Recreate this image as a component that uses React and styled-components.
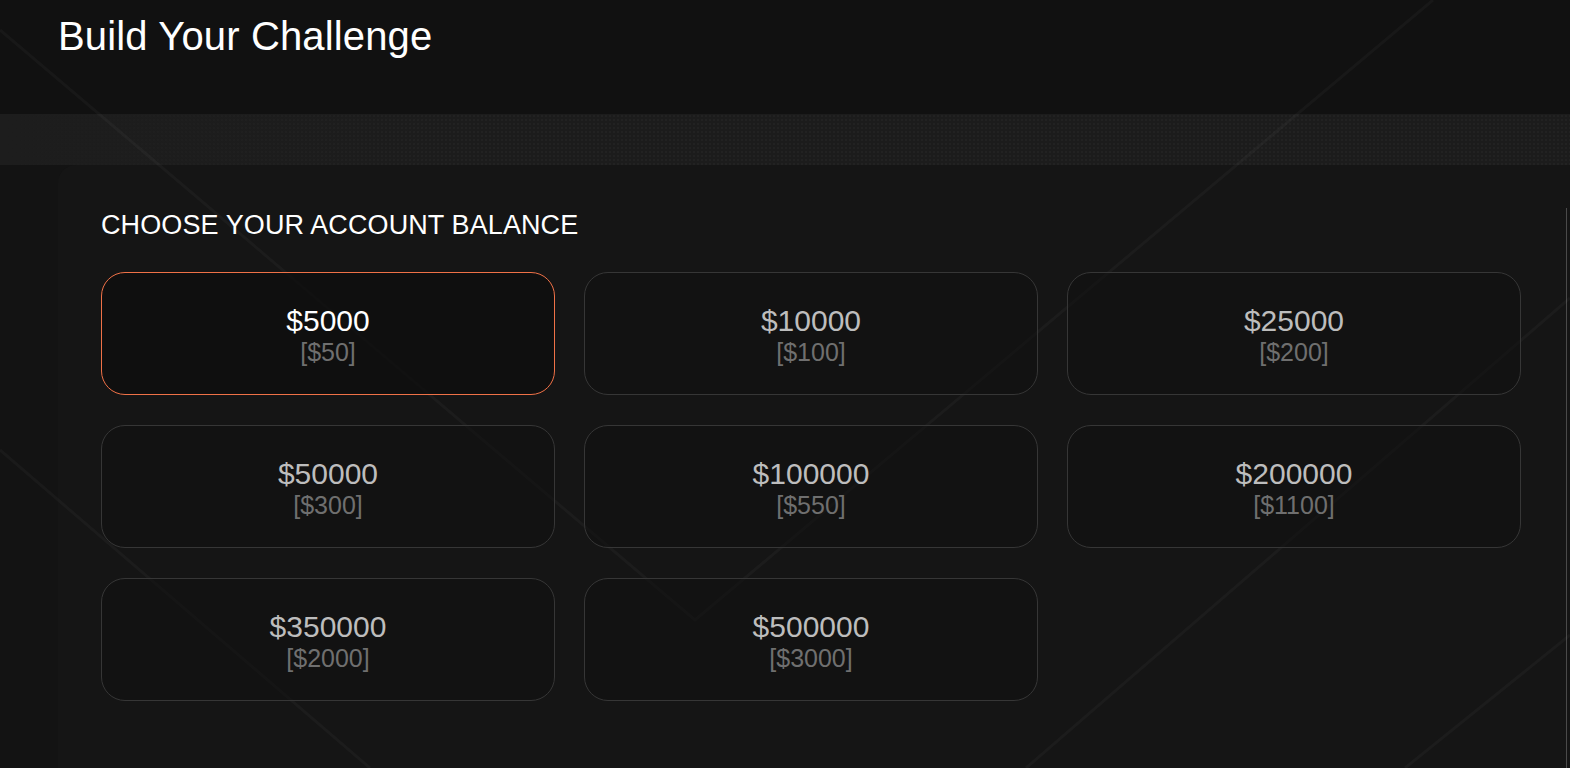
import React, { useState } from "react";
import styled, { createGlobalStyle } from "styled-components";

const GlobalStyle = createGlobalStyle`
  html, body {
    margin: 0;
    padding: 0;
    background: #121212;
    font-family: "Liberation Sans", Arial, sans-serif;
  }
  * { box-sizing: border-box; }
`;

const balances = [
  { amount: "$5000", fee: "[$50]" },
  { amount: "$10000", fee: "[$100]" },
  { amount: "$25000", fee: "[$200]" },
  { amount: "$50000", fee: "[$300]" },
  { amount: "$100000", fee: "[$550]" },
  { amount: "$200000", fee: "[$1100]" },
  { amount: "$350000", fee: "[$2000]" },
  { amount: "$500000", fee: "[$3000]" },
];

const Page = styled.div`
  position: relative;
  display: flex;
  flex-direction: column;
  height: 100vh;
  overflow: hidden;
  background: #121212;
`;

// faint diagonal strokes drawn over the backgrounds, under the text
const Decor = styled.svg`
  position: absolute;
  inset: 0;
  width: 100%;
  height: 100%;
  pointer-events: none;
  z-index: 1;
`;

const Header = styled.header`
  height: 114px;
  flex: none;
  background: #111111;
  padding: 12px 58px 0;
`;

const Title = styled.h1`
  position: relative;
  z-index: 2;
  margin: 0;
  font-size: 40px;
  line-height: 48px;
  font-weight: 400;
  color: #ffffff;
  letter-spacing: 0.15px;
`;

const Band = styled.div`
  height: 51px;
  flex: none;
  background-color: #1c1c1c;
  background-image: linear-gradient(90deg, #1d1d1d 0%, rgba(29, 29, 29, 0) 30%),
    radial-gradient(rgba(255, 255, 255, 0.06) 0.6px, transparent 0.8px);
  background-size: 100% 100%, 4px 4px;
`;

const Body = styled.div`
  flex: 1;
  display: flex;
  padding-left: 58px;
  background: #131313;
`;

const Panel = styled.section`
  position: relative;
  flex: 1;
  background: #151515;
  border-top-left-radius: 18px;
  padding: 44px 49px 0 43px;

  &::after {
    content: "";
    position: absolute;
    right: 3px;
    top: 43px;
    bottom: 0;
    width: 1px;
    background: #4a4a4a;
  }
`;

const Content = styled.div`
  position: relative;
  z-index: 2;
`;

const SectionTitle = styled.h2`
  margin: 0 0 31px;
  font-size: 27px;
  line-height: 32px;
  font-weight: 400;
  color: #ffffff;
  letter-spacing: 0.1px;
`;

const Grid = styled.div`
  display: grid;
  grid-template-columns: repeat(3, 1fr);
  column-gap: 29px;
  row-gap: 30px;
`;

const Card = styled.button`
  height: 123px;
  border-radius: 24px;
  border: 1px solid ${(p) => (p.$active ? "#ef7147" : "#363636")};
  background: ${(p) => (p.$active ? "rgba(14,14,14,0.75)" : "rgba(17,17,17,0.55)")};
  display: flex;
  flex-direction: column;
  align-items: center;
  justify-content: center;
  padding: 4px 0 0;
  cursor: pointer;
  font-family: inherit;
  outline: none;
`;

const Amount = styled.span`
  font-size: 30px;
  line-height: 32px;
  color: ${(p) => (p.$active ? "#ffffff" : "#bdbdbd")};
`;

const Fee = styled.span`
  font-size: 25px;
  line-height: 30px;
  color: #6f6f6f;
`;

export default function App() {
  const [selected, setSelected] = useState(0);

  return (
    <Page>
      <GlobalStyle />
      <Header>
        <Title>Build Your Challenge</Title>
      </Header>
      <Band />
      <Body>
        <Panel>
          <Content>
            <SectionTitle>CHOOSE YOUR ACCOUNT BALANCE</SectionTitle>
            <Grid>
              {balances.map((b, i) => (
                <Card key={b.amount} $active={selected === i} onClick={() => setSelected(i)}>
                  <Amount $active={selected === i}>{b.amount}</Amount>
                  <Fee>{b.fee}</Fee>
                </Card>
              ))}
            </Grid>
          </Content>
        </Panel>
      </Body>
      <Decor viewBox="0 0 1570 768" preserveAspectRatio="none">
        <g stroke="rgba(255,255,255,0.03)" strokeWidth="3" fill="none">
          <polyline points="0,30 695,620 1433,0" />
          <line x1="0" y1="450" x2="370" y2="768" />
          <line x1="1570" y1="298" x2="1026" y2="768" />
          <line x1="1570" y1="635" x2="1405" y2="768" />
        </g>
      </Decor>
    </Page>
  );
}
